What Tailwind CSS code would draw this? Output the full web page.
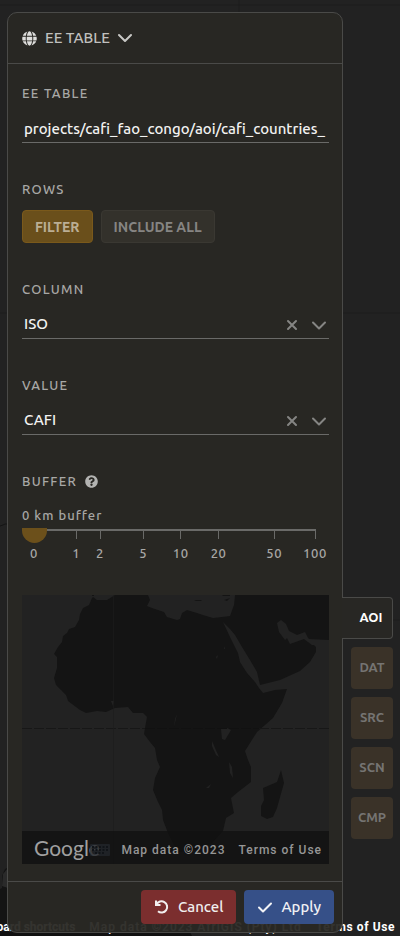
<!DOCTYPE html>
<html lang="en">
<head>
<meta charset="utf-8">
<meta name="viewport" content="width=device-width, initial-scale=1">
<title>Area of interest</title>
<script src="https://cdn.jsdelivr.net/npm/@tailwindcss/browser@4"></script>
</head>
<body class="bg-[#222222] font-['Ubuntu','Noto_Sans',sans-serif] text-white">
<div class="relative flex min-h-screen overflow-hidden pt-3 pr-[7px] pb-[3px] pl-[7px]">

  <!-- Backdrop map -->
  <svg class="absolute inset-0 h-full w-full" aria-hidden="true">
    <path d="M239 0V12M0 5H400M343 313H400M0 313H8M343 620H400" stroke="#1d1d1d" fill="none"/>
    <path d="M0 526l3-1 2-1 3 0" stroke="#141414" fill="none"/>
    <path d="M0 889L2 888 2 876 5 869 9 867V936H0Z" fill="#141414"/>
    <path d="M3 874l5-6v20l-6-2z" fill="#2a2a2a"/>
    <path d="M0 932H190L192 936H0Z" fill="#111111"/>
  </svg>
  <div class="absolute right-[5px] bottom-0 flex gap-[14px] font-[Roboto,sans-serif] text-xs leading-[18px] font-bold whitespace-nowrap">
    <span>Keyboard shortcuts</span>
    <span class="font-medium tracking-[1px]">Map data ©2023 AfriGIS (Pty) Ltd</span>
    <a href="#" class="tracking-wider">Terms of Use</a>
  </div>

  <main class="relative flex min-w-0 flex-1 flex-col rounded-[10px] border border-[#4a4a48] bg-[#292824]/95">
    <header class="flex h-[51px] items-center border-b border-[#4a4a48] px-[14px]">
      <button class="flex items-center gap-2 text-[15px] font-medium text-[#c0c0bf]">
        <svg class="h-[15px] w-[15px]" viewBox="0 0 496 512" fill="#dededc" aria-hidden="true"><path d="M336.500 160C322 70.700 287.800 8 248 8s-74 62.700-88.500 152h177zM152 256c0 22.200 1.200 43.500 3.300 64h185.300c2.100-20.500 3.300-41.800 3.300-64s-1.200-43.500-3.300-64H155.300c-2.100 20.500-3.300 41.800-3.300 64zm324.700-96c-28.600-67.900-86.500-120.400-158-141.600 24.400 33.800 41.200 84.700 50 141.600h108zM177.200 18.400C105.800 39.600 47.800 92.100 19.300 160h108c8.700-56.900 25.500-107.800 49.900-141.600zM487.400 192H372.700c2.100 21 3.300 42.500 3.300 64s-1.200 43-3.300 64h114.600c5.500-20.500 8.600-41.800 8.600-64s-3.100-43.500-8.500-64zM120 256c0-21.500 1.200-43 3.300-64H8.600C3.200 212.500 0 233.800 0 256s3.200 43.500 8.600 64h114.600c-2-21-3.200-42.500-3.200-64zm39.500 96c14.500 89.300 48.700 152 88.500 152s74-62.700 88.500-152h-177zm159.300 141.600c71.400-21.200 129.400-73.700 158-141.600h-108c-8.800 56.900-25.600 107.800-50 141.600zM19.300 352c28.600 67.900 86.500 120.400 158 141.600-24.400-33.800-41.200-84.700-50-141.600h-108z"/></svg>
        <span>EE TABLE</span>
        <svg class="h-[14px] w-[14px]" viewBox="0 0 14 14" fill="none" stroke="#c8c8c6" stroke-width="2" stroke-linecap="round" stroke-linejoin="round" aria-hidden="true"><path d="M1 4L7 10l6-6"/></svg>
      </button>
    </header>

    <div class="flex flex-1 flex-col gap-9 pt-[19px] pr-[13px] pb-[17px] pl-[14px]">
      <div class="flex flex-col gap-2">
        <label for="table" class="text-[13px] leading-5 font-medium tracking-widest text-[#a8a8a6]">EE TABLE</label>
        <input id="table" type="text" value="projects/cafi_fao_congo/aoi/cafi_countries_" class="h-8 w-full border-b border-[#6a6a68] bg-transparent px-[2px] pt-1 text-[15px] font-medium text-[#f2f2f1] outline-none">
      </div>

      <div class="flex flex-col gap-[11px]">
        <span id="rows" class="text-[13px] leading-5 font-medium tracking-widest text-[#a8a8a6]">ROWS</span>
        <div role="group" aria-labelledby="rows" class="flex gap-2">
          <button class="h-[33px] rounded-[4px] border border-[#7a591b] bg-[#6a4f1b] px-3 text-sm font-bold text-[#bbae94]">FILTER</button>
          <button class="h-[33px] rounded-[4px] border border-[#3a3832] bg-[#33312b] px-3 text-sm font-bold text-[#868583]">INCLUDE ALL</button>
        </div>
      </div>

      <div class="flex flex-col gap-2">
        <label for="column" class="text-[13px] leading-5 font-medium tracking-widest text-[#a8a8a6]">COLUMN</label>
        <div class="flex h-8 items-center gap-3 border-b border-[#6a6a68] pt-1 pr-[2px]">
          <select id="column" class="min-w-0 flex-1 appearance-none bg-transparent pl-[2px] text-[15px] font-medium text-[#f2f2f1] outline-none"><option>ISO</option></select>
          <button aria-label="Clear column"><svg class="h-[14px] w-[14px]" viewBox="0 0 14 14" fill="none" stroke="#858583" stroke-width="2" stroke-linecap="round"><path d="M3 3l8 8M11 3l-8 8"/></svg></button>
          <svg class="h-4 w-4" viewBox="0 0 16 16" fill="none" stroke="#858583" stroke-width="2" stroke-linecap="round" stroke-linejoin="round" aria-hidden="true"><path d="M2 5.500L8 11.500l6-6"/></svg>
        </div>
      </div>

      <div class="flex flex-col gap-2">
        <label for="value" class="text-[13px] leading-5 font-medium tracking-widest text-[#a8a8a6]">VALUE</label>
        <div class="flex h-8 items-center gap-3 border-b border-[#6a6a68] pt-1 pr-[2px]">
          <select id="value" class="min-w-0 flex-1 appearance-none bg-transparent pl-[2px] text-[15px] font-medium text-[#f2f2f1] outline-none"><option>CAFI</option></select>
          <button aria-label="Clear value"><svg class="h-[14px] w-[14px]" viewBox="0 0 14 14" fill="none" stroke="#858583" stroke-width="2" stroke-linecap="round"><path d="M3 3l8 8M11 3l-8 8"/></svg></button>
          <svg class="h-4 w-4" viewBox="0 0 16 16" fill="none" stroke="#858583" stroke-width="2" stroke-linecap="round" stroke-linejoin="round" aria-hidden="true"><path d="M2 5.500L8 11.500l6-6"/></svg>
        </div>
      </div>

      <div class="flex flex-col">
        <div class="flex items-center gap-2">
          <label for="buffer" class="text-[13px] leading-5 font-medium tracking-widest text-[#a8a8a6]">BUFFER</label>
          <svg class="h-[13px] w-[13px]" viewBox="0 0 512 512" fill="#b3b3b1" role="img" aria-label="Help"><path d="M504 256c0 136.997-111.043 248-248 248S8 392.997 8 256C8 119.083 119.043 8 256 8s248 111.083 248 248zM262.655 90c-54.497 0-89.255 22.957-116.549 63.758-3.536 5.286-2.353 12.415 2.715 16.258l34.699 26.310c5.205 3.947 12.621 3.008 16.665-2.122 17.864-22.658 30.113-35.797 57.303-35.797 20.429 0 45.698 13.148 45.698 32.958 0 14.976-12.363 22.667-32.534 33.976C247.128 238.528 216 254.941 216 296v4c0 6.627 5.373 12 12 12h56c6.627 0 12-5.373 12-12v-1.333c0-28.462 83.186-29.647 83.186-106.667 0-58.002-60.165-102-116.531-102zM256 338c-25.365 0-46 20.635-46 46 0 25.364 20.635 46 46 46s46-20.636 46-46c0-25.365-20.635-46-46-46z"/></svg>
        </div>
        <div class="pt-[14px] text-[13px] leading-5 font-medium tracking-[1px] text-[#a8a8a6]">0 km buffer</div>
        <div class="relative mt-[3px] h-[35px]">
          <div class="absolute right-[13px] left-3 top-[1px] h-[2px] bg-[#6a6a68]"></div>
          <div class="absolute top-[2px] right-[14px] left-3 text-[13px] leading-4 font-medium tracking-wider text-[#a8a8a6]">
            <div class="absolute flex w-10 -translate-x-1/2 flex-col items-center gap-[6px]" style="left:0%"><i class="h-[9px] w-px bg-[#6a6a68]"></i>0</div>
            <div class="absolute flex w-10 -translate-x-1/2 flex-col items-center gap-[6px]" style="left:15%"><i class="h-[9px] w-px bg-[#6a6a68]"></i>1</div>
            <div class="absolute flex w-10 -translate-x-1/2 flex-col items-center gap-[6px]" style="left:23.500%"><i class="h-[9px] w-px bg-[#6a6a68]"></i>2</div>
            <div class="absolute flex w-10 -translate-x-1/2 flex-col items-center gap-[6px]" style="left:38.900%"><i class="h-[9px] w-px bg-[#6a6a68]"></i>5</div>
            <div class="absolute flex w-10 -translate-x-1/2 flex-col items-center gap-[6px]" style="left:52.200%"><i class="h-[9px] w-px bg-[#6a6a68]"></i>10</div>
            <div class="absolute flex w-10 -translate-x-1/2 flex-col items-center gap-[6px]" style="left:65.700%"><i class="h-[9px] w-px bg-[#6a6a68]"></i>20</div>
            <div class="absolute flex w-10 -translate-x-1/2 flex-col items-center gap-[6px]" style="left:85.500%"><i class="h-[9px] w-px bg-[#6a6a68]"></i>50</div>
            <div class="absolute flex w-10 -translate-x-1/2 flex-col items-center gap-[6px]" style="left:100%"><i class="h-[9px] w-px bg-[#6a6a68]"></i>100</div>
          </div>
          <input id="buffer" type="range" min="0" max="100" value="0" class="absolute inset-x-0 top-0 m-0 h-[15px] w-full appearance-none bg-transparent [&::-webkit-slider-thumb]:h-[15px] [&::-webkit-slider-thumb]:w-[25px] [&::-webkit-slider-thumb]:appearance-none [&::-webkit-slider-thumb]:rounded-b-[13px] [&::-webkit-slider-thumb]:bg-[#6c501b]">
        </div>
      </div>

      <div class="relative -mt-[4px] h-[269px] overflow-hidden bg-[#222222]">
        <svg class="h-full w-full" viewBox="0 0 307 269" preserveAspectRatio="xMidYMid slice" role="img" aria-label="Map of Africa">
          <g fill="#141414">
            <path d="M93 0L85 5 75 5 71 2 70 3 67 10 61 13 58 19 57 25 53 32 47 34 45 38 41 41 40 47 36 52 32 59 35 62 35 73 32 83 34 90 39 95 44 100 46 106 58 115 64 118 75 116 84 117 93 113 106 112 111 118 121 118 125 122 123 133 122 139 128 147 133 153 135 165 138 172 133 183 131 195 136 207 140 215 141 225 146 238 152 250 157 257 175 255 190 248 201 236 204 223 212 218 209 203 216 197 229 187 229 172 226 165 223 156 235 137 251 123 260 108 265 94 253 95 241 98 237 93 233 87 225 78 218 67 216 58 208 42 201 27 208 34 213 40 220 52 228 65 235 77 238 90 258 85 278 76 288 67 294 57 294 52 286 44 307 45V0H213L212 10 208 21 200 22 191 23 181 20 175 18 165 15 160 18 158 24 155 25 145 22 142 17 130 13 125 11 128 5 126 0Z"/>
            <path d="M259 175L262 188 255 213 251 222 245 224 239 221 239 211 242 205 241 193 255 187Z"/>
            <path d="M172 5l8 0-1 1h-5zM202 5l6-2-3 3zM200 0h8v1h-7zM70 0h2v1h-2z"/>
          </g>
          <g fill="#222222">
            <path d="M255 28L259 25 264 29 267 36 275 40 283 37 286 43 294 50 290 50 282 44 268 49 265 43 263 45 257 37Z"/>
            <path d="M199 134l6-1 4 2-3 5-3 5-3-1zM190 146l3 7 4 9-3-2-4-9zM207 167l3 5 1 11-3-5zM184 193l5-4-2 4zM176 205l2-3zM89 106h3l-1 5zM155 119l-3 13 1-8zM202 51l1 3h-1zM194 62l2-2-1 4z"/>
          </g>
          <path d="M0 133.500H123M237 133.500H307" stroke="#171717" stroke-dasharray="10 2"/>
          <path d="M123 133.500H237" stroke="#111111" stroke-dasharray="10 2"/>
          <path d="M91.500 0V269" stroke="#1d1d1d" stroke-opacity=".6"/>
        </svg>
        <div class="absolute inset-x-0 bottom-0 flex h-[33px] items-center bg-[#101010]/75 pt-1 pr-[7px] pl-3 font-[Roboto,sans-serif] text-xs font-medium tracking-[1px] whitespace-nowrap text-[#969696]">
          <span class="-mt-1 font-[Lato,sans-serif] text-[21px] leading-8 font-normal tracking-normal text-[#a0a0a0]">Google</span>
          <svg class="-ml-[10px] h-3 w-5 shrink-0" viewBox="0 0 20 12" aria-hidden="true"><rect width="20" height="12" rx="1" fill="#22252a" fill-opacity=".8"/><path d="M2 3h16M2 6h16M5 9h10" stroke="#111418" stroke-width="2" stroke-dasharray="2 1.500"/></svg>
          <span class="ml-auto">Map data ©2023</span>
          <a href="#" class="ml-[13px]">Terms of Use</a>
        </div>
      </div>
    </div>

    <footer class="flex justify-end gap-2 border-t border-[#4a4a48] p-2">
      <button class="flex h-[34px] items-center gap-2 rounded-[4px] bg-[#7b2e2e] px-[13px] text-[15px] font-medium text-[#f0eeee]">
        <svg class="h-4 w-4" viewBox="0 0 16 16" fill="none" stroke="#f2eeee" stroke-width="2" aria-hidden="true"><path d="M2 1.500v4.500h4.500M2.500 5.500A5.600 5.600 0 1 1 4 12.200"/></svg>
        Cancel
      </button>
      <button class="flex h-[34px] items-center gap-2 rounded-[4px] bg-[#365088] px-[13px] text-[15px] font-medium text-[#f0f1f4]">
        <svg class="h-4 w-4" viewBox="0 0 16 16" fill="none" stroke="#f2f3f6" stroke-width="2" stroke-linecap="round" stroke-linejoin="round" aria-hidden="true"><path d="M2 8.500l4 4 8-8"/></svg>
        Apply
      </button>
    </footer>
  </main>

  <nav class="relative -ml-px flex flex-col items-end justify-end gap-2 pb-[94px] text-[13px] font-bold text-[#757472]">
    <button class="h-[42px] w-[51px] rounded-r-[4px] border border-l-0 border-[#4a4a48] bg-[#282724] pl-2 text-white">AOI</button>
    <button class="h-[42px] w-[42px] rounded-[4px] bg-[#3a3228]">DAT</button>
    <button class="h-[42px] w-[42px] rounded-[4px] bg-[#3a3228]">SRC</button>
    <button class="h-[42px] w-[42px] rounded-[4px] bg-[#3a3228]">SCN</button>
    <button class="h-[42px] w-[42px] rounded-[4px] bg-[#3a3228]">CMP</button>
  </nav>
</div>
</body>
</html>
